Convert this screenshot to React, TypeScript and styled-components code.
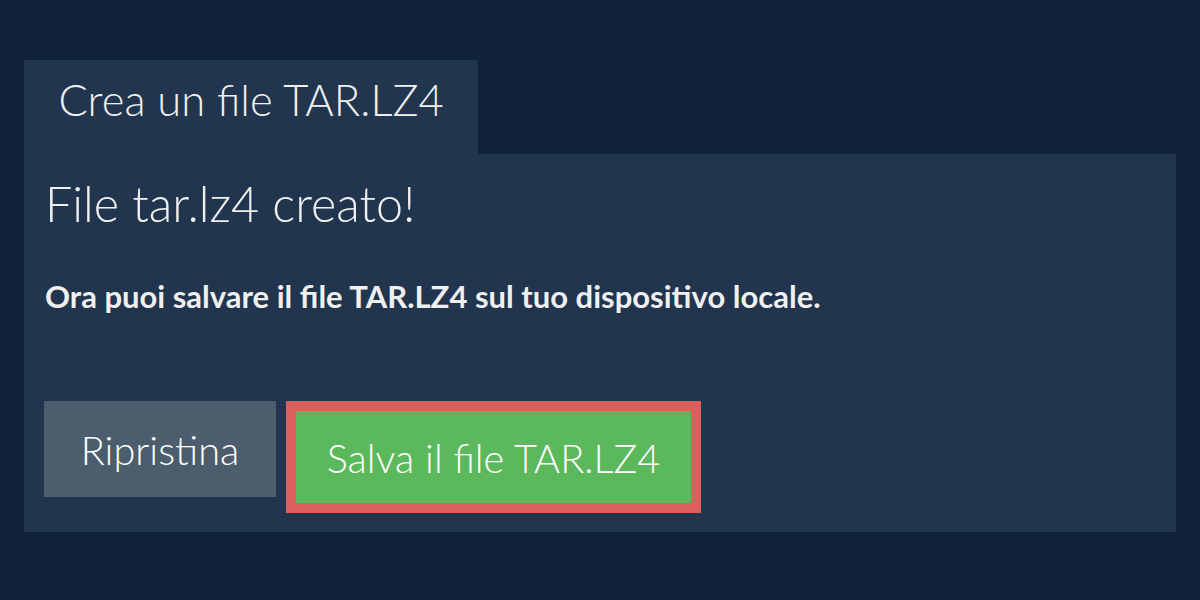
import React from "react";
import styled, { createGlobalStyle } from "styled-components";

const Global = createGlobalStyle`
  html, body { margin: 0; padding: 0; background: #11233a; }
  body { font-family: Lato, "Open Sans", sans-serif; color: #f0f0f0; }
`;

const Page = styled.div`
  width: 1200px;
  height: 600px;
  box-sizing: border-box;
  padding: 60px 24px 0 24px;
  display: flex;
  flex-direction: column;
`;

const Tabs = styled.div`
  display: flex;
`;

const Tab = styled.div`
  background: #21354e;
  height: 94px;
  width: 454px;
  box-sizing: border-box;
  padding: 13px 0 0 0;
  text-align: center;
  font-size: 43.5px;
  line-height: 1.2;
  font-weight: 300;
  color: #f0f0f0;
`;

const Panel = styled.div`
  background: #21354e;
  padding: 20px 20px 19px 20px;
  display: flex;
  flex-direction: column;
`;

const Heading = styled.h2`
  margin: 0 0 0 1px;
  font-size: 48.5px;
  font-weight: 300;
  line-height: 1.2;
  color: #f0f0f0;
`;

const Message = styled.p`
  margin: 46px 0 0 1px;
  font-size: 31px;
  font-weight: 700;
  line-height: 36px;
  color: #f0f0f0;
`;

const Actions = styled.div`
  display: flex;
  align-items: flex-start;
  gap: 10px;
  margin-top: 87px;
`;

const Button = styled.button<{ $variant: "reset" | "save" }>`
  font-family: Lato, "Open Sans", sans-serif;
  font-size: 39.7px;
  font-weight: 300;
  color: #ffffff;
  border: ${(p) => (p.$variant === "save" ? "10px solid #dc5f5b" : "none")};
  background: ${(p) => (p.$variant === "save" ? "#5cb85c" : "#4c5d6d")};
  height: ${(p) => (p.$variant === "save" ? "112px" : "96px")};
  width: ${(p) => (p.$variant === "save" ? "415px" : "232px")};
  padding: 0;
  box-sizing: border-box;
  display: flex;
  align-items: center;
  justify-content: center;
  cursor: pointer;
`;

export default function App() {
  return (
    <>
      <Global />
      <Page>
        <Tabs>
          <Tab>Crea un file TAR.LZ4</Tab>
        </Tabs>
        <Panel>
          <Heading>File tar.lz4 creato!</Heading>
          <Message>Ora puoi salvare il file TAR.LZ4 sul tuo dispositivo locale.</Message>
          <Actions>
            <Button $variant="reset">Ripristina</Button>
            <Button $variant="save">Salva il file TAR.LZ4</Button>
          </Actions>
        </Panel>
      </Page>
    </>
  );
}
